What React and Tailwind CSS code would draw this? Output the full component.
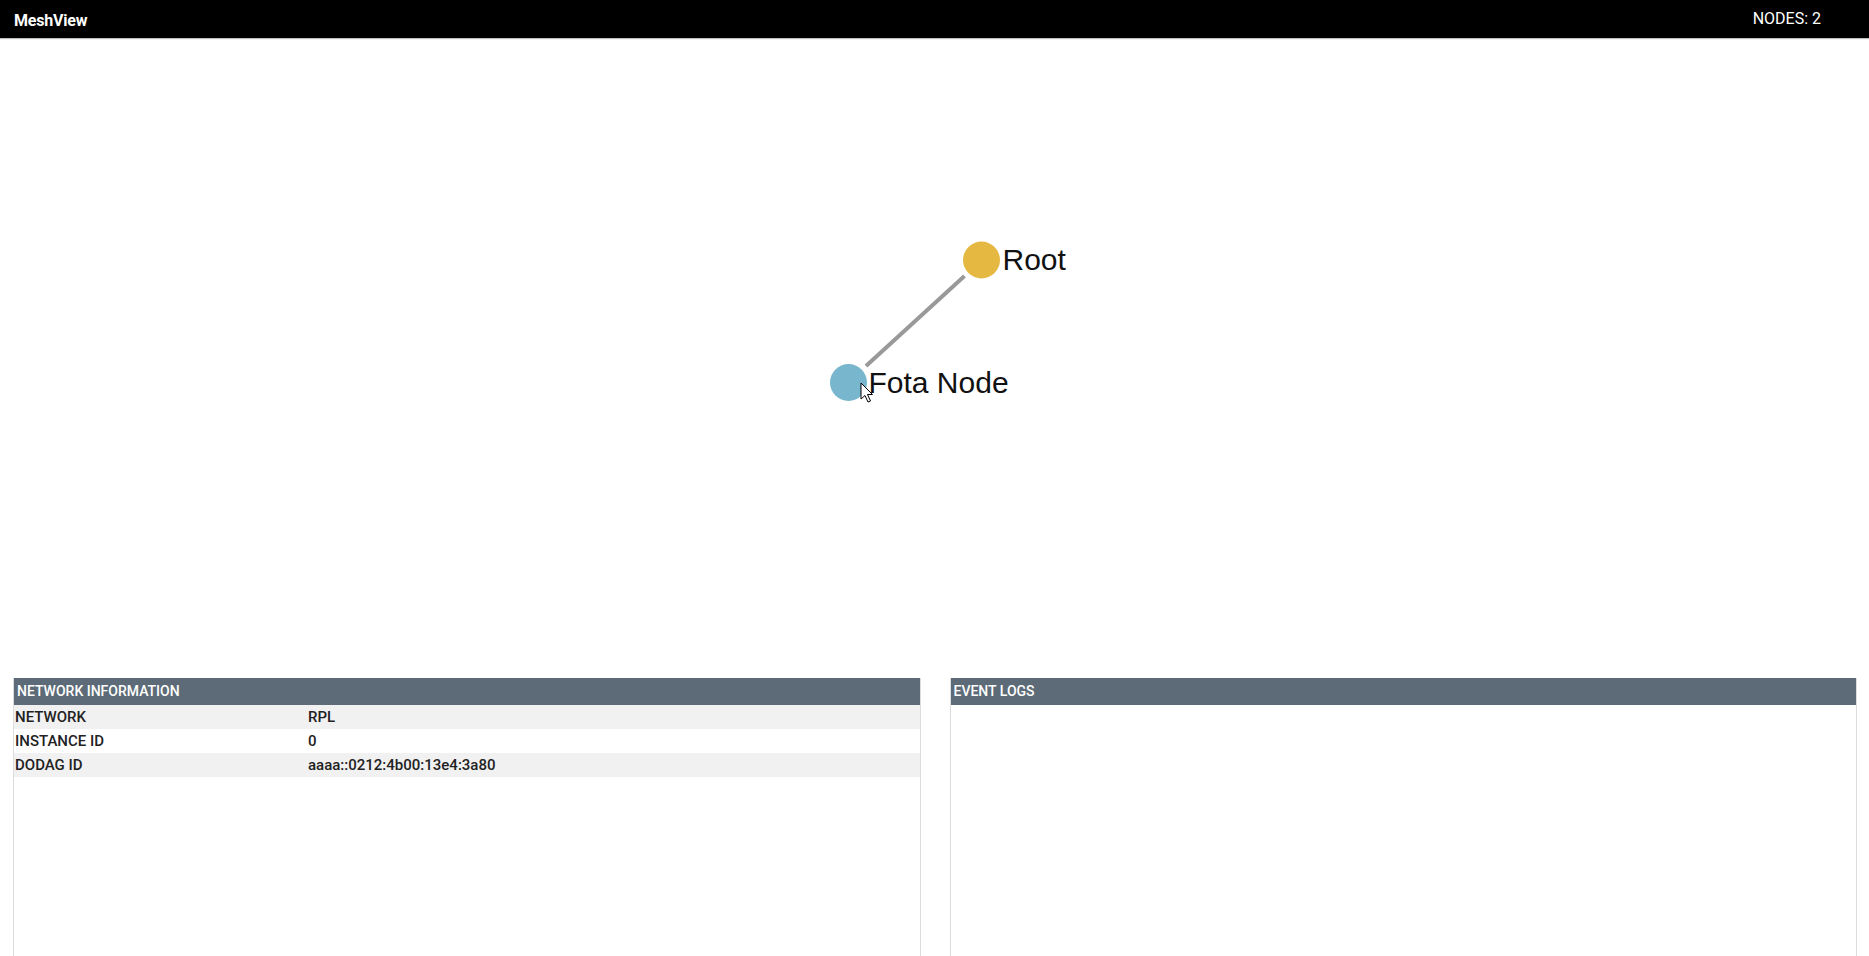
import React from "react";

const rows = [
  { label: "NETWORK", value: "RPL" },
  { label: "INSTANCE ID", value: "0" },
  { label: "DODAG ID", value: "aaaa::0212:4b00:13e4:3a80" },
];

const nodes = [
  { id: "root", name: "Root", x: 981.5, y: 221, fill: "#e5b841", dx: 21 },
  { id: "fota", name: "Fota Node", x: 848.5, y: 343.5, fill: "#78b6cd", dx: 20 },
];

function MeshGraph() {
  return (
    <svg width="1869" height="639" viewBox="0 0 1869 639" className="block shrink-0">
      <line x1="964.5" y1="237" x2="866" y2="327" stroke="#999999" strokeWidth="4" />
      {nodes.map((n) => (
        <g key={n.id}>
          <circle cx={n.x} cy={n.y} r="18.5" fill={n.fill} />
          <text
            x={n.x + n.dx}
            y={n.y + 10}
            fill="#111111"
            fontSize="30"
            fontFamily="'Liberation Sans', Arial, sans-serif"
          >
            {n.name}
          </text>
        </g>
      ))}
      {/* mouse cursor over the fota node */}
      <polygon
        points="861,344 861,360 865,356.5 868,363 870.5,362 867.5,355.5 872.5,355.5"
        fill="#ffffff"
        stroke="#000000"
        strokeWidth="1"
        strokeLinejoin="round"
      />
    </svg>
  );
}

function Panel({ title, children }) {
  return (
    <div className="h-[300px] border border-[#dcdcdc] border-t-0 bg-white">
      <div className="h-[27px] bg-[#5d6b78] pl-[3px] flex items-center text-[14px] font-medium text-white">
        {title}
      </div>
      {children}
    </div>
  );
}

export default function App() {
  return (
    <div className="h-screen overflow-hidden bg-white font-['Roboto',sans-serif]">
      <header className="h-[38px] bg-black flex items-center justify-between pl-[14px] pr-[48px] shadow-[0_1px_1px_rgba(0,0,0,0.25)] relative">
        <span className="mt-[3px] text-white font-bold text-[16px] tracking-[-0.2px]">MeshView</span>
        <span className="text-white text-[16px]">NODES: 2</span>
      </header>
      <div className="h-px" />
      <MeshGraph />
      <div className="grid grid-cols-2 gap-[29px] pl-[13px] pr-[12px]">
        <Panel title="NETWORK INFORMATION">
          {rows.map((r, i) => (
            <div
              key={r.label}
              className={`grid grid-cols-[293px_1fr] h-[24px] items-center pl-[1px] text-[15px] font-medium text-[#222222] ${
                i % 2 === 0 ? "bg-[#f1f1f1]" : "bg-white"
              }`}
            >
              <span>{r.label}</span>
              <span>{r.value}</span>
            </div>
          ))}
        </Panel>
        <Panel title="EVENT LOGS" />
      </div>
    </div>
  );
}
